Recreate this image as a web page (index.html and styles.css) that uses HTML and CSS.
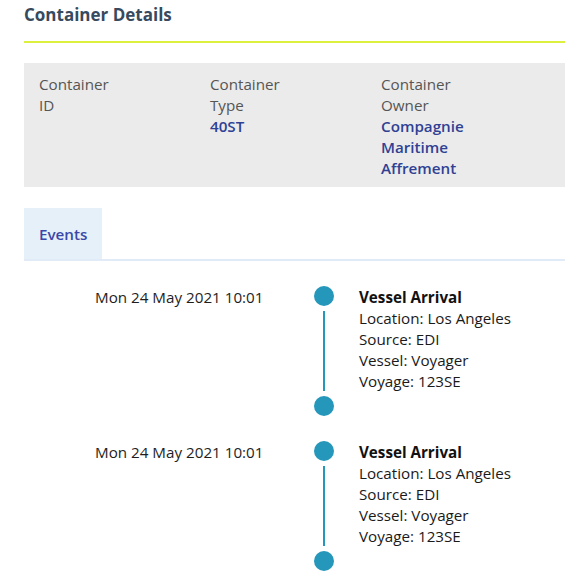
FILE: index.html
```html
<!DOCTYPE html>
<html lang="en">
<head>
<meta charset="utf-8">
<title>Container Details</title>
<link rel="stylesheet" href="styles.css">
</head>
<body>
<div class="page">
  <h1 class="title">Container Details</h1>

  <div class="details">
    <div class="field">
      <div class="label">Container<br>ID</div>
    </div>
    <div class="field">
      <div class="label">Container<br>Type</div>
      <div class="value">40ST</div>
    </div>
    <div class="field">
      <div class="label">Container<br>Owner</div>
      <div class="value">Compagnie<br>Maritime<br>Affrement</div>
    </div>
  </div>

  <div class="tabs">
    <div class="tab active">Events</div>
  </div>

  <div class="timeline">
    <div class="event">
      <div class="date">Mon 24 May 2021 10:01</div>
      <div class="marker"><span class="dot"></span><span class="line"></span><span class="dot"></span></div>
      <div class="info">
        <div class="event-title">Vessel Arrival</div>
        <div>Location: Los Angeles</div>
        <div>Source: EDI</div>
        <div>Vessel: Voyager</div>
        <div>Voyage: 123SE</div>
      </div>
    </div>
    <div class="event">
      <div class="date">Mon 24 May 2021 10:01</div>
      <div class="marker"><span class="dot"></span><span class="line"></span><span class="dot"></span></div>
      <div class="info">
        <div class="event-title">Vessel Arrival</div>
        <div>Location: Los Angeles</div>
        <div>Source: EDI</div>
        <div>Vessel: Voyager</div>
        <div>Voyage: 123SE</div>
      </div>
    </div>
  </div>
</div>
</body>
</html>
```

FILE: styles.css
```css
html, body {
  margin: 0;
  padding: 0;
  background: #ffffff;
}

body {
  font-family: "Open Sans", "Noto Sans", "Liberation Sans", sans-serif;
  font-size: 15.2px;
  line-height: 21px;
  color: #1c1c1c;
  overflow: hidden;
}

.page {
  padding-left: 24px;
}

.title {
  margin: 0;
  padding: 3px 0 14px;
  font-size: 17px;
  line-height: 24px;
  font-weight: 700;
  color: #374a5e;
  border-bottom: 2px solid #def03e;
}

.details {
  margin-top: 20px;
  background: #ebebeb;
  padding: 11px 15px 8px;
  display: grid;
  grid-template-columns: 171px 171px 171px;
}

.label {
  color: #555555;
}

.value {
  color: #2f4194;
  font-weight: 600;
}

.tabs {
  margin-top: 21px;
  display: flex;
  border-bottom: 2px solid #e0ebf7;
}

.tab {
  padding: 16px 15px 14px;
  color: #3b47a8;
  font-weight: 600;
}

.tab.active {
  background: #e6f0f9;
}

.timeline {
  margin-top: 25px;
  display: flex;
  flex-direction: column;
  gap: 25px;
}

.event {
  display: grid;
  grid-template-columns: 290px 20px 1fr;
  align-items: start;
}

.date {
  padding-top: 1px;
  padding-left: 71px;
  color: #1e1e1e;
}

.marker {
  display: flex;
  flex-direction: column;
  align-items: center;
}

.dot {
  width: 20px;
  height: 20px;
  border-radius: 50%;
  background: #2497ba;
}

.line {
  width: 2px;
  height: 80px;
  margin: 5px 0;
  background: #2497ba;
}

.info {
  padding-top: 1px;
  padding-left: 25px;
  color: #1a1a1a;
}

.event-title {
  font-weight: 700;
  color: #111111;
}
```
